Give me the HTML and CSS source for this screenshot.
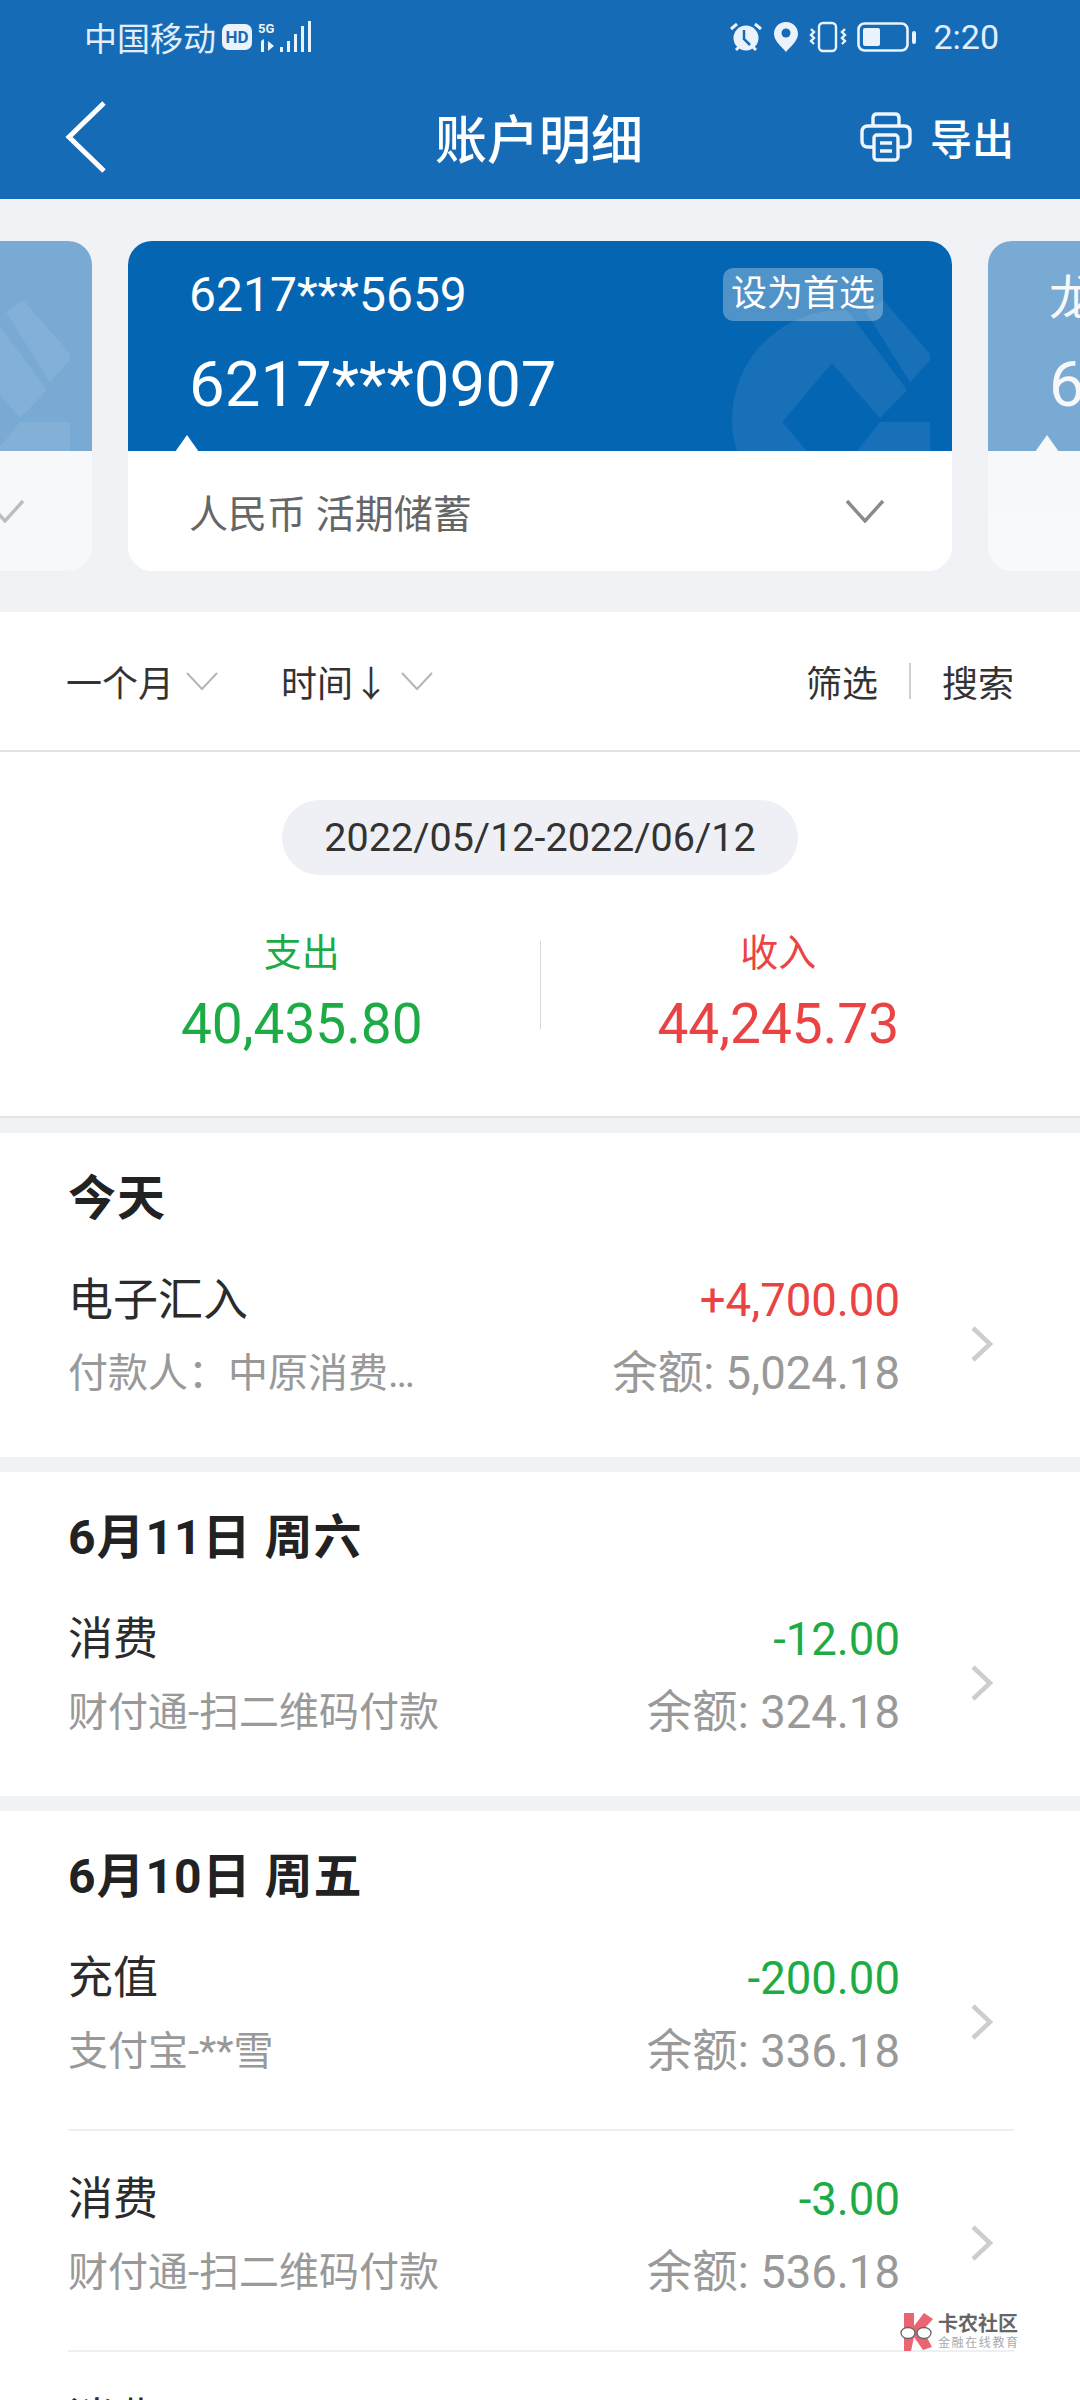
FILE: index.html
```html
<!DOCTYPE html>
<html lang="zh-CN">
<head>
  <meta charset="UTF-8" />
  <meta name="viewport" content="width=device-width, initial-scale=1.0">
  <title>账户明细</title>
  <link rel="stylesheet" href="styles.css">
</head>
<body>
  <!-- Header -->
  <header class="header">
    <div class="status">
      <div class="status-left">
        <span>中国移动</span>
        <span class="hd">HD</span>
        <svg width="54" height="32" viewBox="0 0 54 32" fill="#eaf3fb">
          <text x="0" y="12" class="net">5G</text>
          <path d="M3 20l3-2v13H3zM10 20l6 5-6 5zM22 26h3v5h-3zM29 20h3v11h-3zM36 13h3v18h-3zM43 5h3v26h-3zM50 0h3v31h-3z"/>
        </svg>
      </div>
      <div class="status-right">
        <svg width="34" height="32" viewBox="0 0 34 32">
          <circle cx="17" cy="17" r="12.5" fill="#eaf3fb"/>
          <path d="M2 8l6-5M32 8l-6-5M7 29l3-3M27 29l-3-3" stroke="#eaf3fb" stroke-width="3" fill="none"/>
          <path d="M15 9v9l6 6" stroke="#166bb7" stroke-width="2.5" fill="none"/>
        </svg>
        <svg width="26" height="32" viewBox="0 0 26 32">
          <path d="M13 1C6 1 1 6 1 13c0 7 8 13 12 18 4-5 12-11 12-18C25 6 20 1 13 1z" fill="#eaf3fb"/>
          <circle cx="13" cy="12" r="4.5" fill="#166bb7"/>
        </svg>
        <svg width="38" height="32" viewBox="0 0 38 32" fill="none" stroke="#eaf3fb" stroke-width="2.4">
          <rect x="10" y="2" width="17" height="28" rx="4"/>
          <path d="M2 8l3 3-3 3 3 3-3 3 3 3M36 8l-3 3 3 3-3 3 3 3-3 3"/>
        </svg>
        <svg width="62" height="32" viewBox="0 0 62 32">
          <rect x="1.5" y="2.5" width="49" height="27" rx="6" fill="none" stroke="#eaf3fb" stroke-width="2.6"/>
          <rect x="6" y="7" width="17" height="18" rx="2" fill="#eaf3fb"/>
          <rect x="55" y="10" width="4" height="13" rx="2" fill="#eaf3fb"/>
        </svg>
        <span class="clock">2:20</span>
      </div>
    </div>
    <div class="title-bar">
      <svg class="back" width="44" height="72" viewBox="0 0 44 72" fill="none" stroke="#fff" stroke-width="5">
        <path d="M40 2L5 36l35 34"/>
      </svg>
      <h1 class="title">账户明细</h1>
      <div class="export">
        <svg width="52" height="50" viewBox="0 0 52 50" fill="none" stroke="#eef5fb" stroke-width="3.4">
          <path d="M13 14V6q0-4 4-4h18q4 0 4 4v8"/>
          <path d="M13 35H8q-6 0-6-6V20q0-6 6-6h36q6 0 6 6v9q0 6-6 6h-5"/>
          <rect x="14" y="23" width="24" height="25" rx="3"/>
          <path d="M20 31h12M20 39h12"/>
        </svg>
        <span>导出</span>
      </div>
    </div>
  </header>

  <!-- Account cards -->
  <section class="cards">
    <div class="cards-track">
      <div class="card card-side">
        <div class="card-top">
          <svg class="watermark" width="824" height="210" viewBox="128 241 824 210" fill="#fff">
            <path d="M847 310A110 110 0 0 0 732 420Q732 436 737 451H807L782 422 832 363 880 418 907 390z"/>
            <path d="M866 312L883 300 930 354V360L910 382z"/>
            <path d="M880 422H930V451H857z"/>
          </svg>
        </div>
        <div class="card-bottom">
          <svg class="chev" width="40" height="24" viewBox="0 0 40 24" fill="none" stroke="#8a8a8a" stroke-width="3.4"><path d="M2 2l18 20L38 2"/></svg>
        </div>
      </div>
      <div class="card">
        <div class="card-top">
          <svg class="watermark" width="824" height="210" viewBox="128 241 824 210" fill="#fff">
            <path d="M847 310A110 110 0 0 0 732 420Q732 436 737 451H807L782 422 832 363 880 418 907 390z"/>
            <path d="M866 312L883 300 930 354V360L910 382z"/>
            <path d="M880 422H930V451H857z"/>
          </svg>
          <div class="card-row">
            <span class="card-sub">6217***5659</span>
            <span class="tag">设为首选</span>
          </div>
          <div class="card-no">6217***0907</div>
        </div>
        <div class="card-bottom">
          <span class="card-type">人民币 活期储蓄</span>
          <svg class="chev" width="40" height="24" viewBox="0 0 40 24" fill="none" stroke="#8a8a8a" stroke-width="3.4"><path d="M2 2l18 20L38 2"/></svg>
        </div>
        <span class="notch"></span>
      </div>
      <div class="card card-side">
        <div class="card-top">
          <div class="card-row"><span class="card-sub">龙卡</span></div>
          <div class="card-no">6217</div>
        </div>
        <div class="card-bottom"></div>
        <span class="notch"></span>
      </div>
    </div>
  </section>

  <!-- Filter bar -->
  <nav class="filters">
    <div class="filter-item">一个月
      <svg width="32" height="20" viewBox="0 0 32 20" fill="none" stroke="#b5b5b5" stroke-width="2"><path d="M1 2l15 16L31 2"/></svg>
    </div>
    <div class="filter-item filter-time">时间↓
      <svg width="32" height="20" viewBox="0 0 32 20" fill="none" stroke="#b5b5b5" stroke-width="2"><path d="M1 2l15 16L31 2"/></svg>
    </div>
    <div class="filter-links">
      <span>筛选</span>
      <i class="filter-sep"></i>
      <span>搜索</span>
    </div>
  </nav>

  <!-- Summary -->
  <section class="summary">
    <div class="range">2022/05/12-2022/06/12</div>
    <div class="totals">
      <div class="total green">
        <div class="total-label">支出</div>
        <div class="total-num">40,435.80</div>
      </div>
      <i class="total-sep"></i>
      <div class="total red">
        <div class="total-label">收入</div>
        <div class="total-num">44,245.73</div>
      </div>
    </div>
  </section>

  <!-- Transactions -->
  <section class="day">
    <h2 class="day-title">今天</h2>
    <div class="tx">
      <div class="tx-info">
        <div class="tx-name">电子汇入</div>
        <div class="tx-desc">付款人：中原消费…</div>
      </div>
      <div class="tx-money">
        <div class="tx-amount red">+4,700.00</div>
        <div class="tx-balance">余额: 5,024.18</div>
      </div>
      <svg class="tx-arrow" width="22" height="36" viewBox="0 0 22 36" fill="none" stroke="#cdcdcd" stroke-width="4.5"><path d="M2 2l17 16L2 34"/></svg>
    </div>
  </section>

  <section class="day">
    <h2 class="day-title">6月11日 周六</h2>
    <div class="tx">
      <div class="tx-info">
        <div class="tx-name">消费</div>
        <div class="tx-desc">财付通-扫二维码付款</div>
      </div>
      <div class="tx-money">
        <div class="tx-amount green">-12.00</div>
        <div class="tx-balance">余额: 324.18</div>
      </div>
      <svg class="tx-arrow" width="22" height="36" viewBox="0 0 22 36" fill="none" stroke="#cdcdcd" stroke-width="4.5"><path d="M2 2l17 16L2 34"/></svg>
    </div>
  </section>

  <section class="day">
    <h2 class="day-title">6月10日 周五</h2>
    <div class="tx">
      <div class="tx-info">
        <div class="tx-name">充值</div>
        <div class="tx-desc">支付宝-**雪</div>
      </div>
      <div class="tx-money">
        <div class="tx-amount green">-200.00</div>
        <div class="tx-balance">余额: 336.18</div>
      </div>
      <svg class="tx-arrow" width="22" height="36" viewBox="0 0 22 36" fill="none" stroke="#cdcdcd" stroke-width="4.5"><path d="M2 2l17 16L2 34"/></svg>
    </div>
    <div class="tx">
      <div class="tx-info">
        <div class="tx-name">消费</div>
        <div class="tx-desc">财付通-扫二维码付款</div>
      </div>
      <div class="tx-money">
        <div class="tx-amount green">-3.00</div>
        <div class="tx-balance">余额: 536.18</div>
      </div>
      <svg class="tx-arrow" width="22" height="36" viewBox="0 0 22 36" fill="none" stroke="#cdcdcd" stroke-width="4.5"><path d="M2 2l17 16L2 34"/></svg>
    </div>
    <div class="tx tx-cut">
      <div class="tx-info">
        <div class="tx-name">消费</div>
      </div>
    </div>
  </section>

  <!-- Site watermark -->
  <div class="stamp">
    <svg width="34" height="38" viewBox="0 0 34 38">
      <path d="M4 0h10v13L24 0l9 6-10 11 9 17-9 3-9-13-3 14H4z" fill="#ea6472"/>
      <ellipse cx="8" cy="20" rx="7" ry="5.5" fill="#fff" stroke="#666" stroke-width="1.3"/>
      <ellipse cx="24" cy="20" rx="7" ry="5.5" fill="#fff" stroke="#666" stroke-width="1.3"/>
    </svg>
    <div>
      <div class="stamp-name">卡农社区</div>
      <div class="stamp-sub">金融在线教育</div>
    </div>
  </div>
</body>
</html>
```

FILE: styles.css
```css
* {
  box-sizing: border-box;
}
html, body {
  height: 2400px;
  overflow: hidden;
}
body {
  margin: 0;
  position: relative;
  background: #f0f2f6;
  color: #2b2b2b;
  font-family: Roboto, "Noto Sans CJK SC", sans-serif;
}

/* Header */
.header {
  height: 199px;
  background: #166bb7;
  color: #fff;
}
.status {
  height: 74px;
  padding: 0 81px 0 84px;
  display: flex;
  justify-content: space-between;
  align-items: center;
  color: #e3eefa;
  font-size: 33px;
}
.status-left, .status-right {
  display: flex;
  align-items: center;
}
.status-left {
  gap: 6px;
}
.status-right {
  gap: 10px;
}
.hd {
  width: 30px;
  height: 26px;
  border-radius: 7px;
  background: #eaf3fb;
  color: #166bb7;
  font-size: 17px;
  font-weight: 700;
  text-align: center;
  line-height: 26px;
}
.net {
  font-size: 13px;
  font-weight: 700;
}
.clock {
  font-size: 34px;
  margin-left: 4px;
}
.title-bar {
  height: 125px;
  padding: 0 66px 0 64px;
  display: grid;
  grid-template-columns: 1fr auto 1fr;
  align-items: center;
}
.title {
  margin: 0;
  font-size: 52px;
  font-weight: 500;
}
.export {
  justify-self: end;
  display: flex;
  align-items: center;
  gap: 18px;
  font-size: 42px;
  font-weight: 500;
}

/* Cards */
.cards {
  height: 413px;
  padding-top: 42px;
  overflow: hidden;
}
.cards-track {
  display: flex;
  gap: 36px;
  margin-left: -732px;
}
.card {
  position: relative;
  flex: 0 0 824px;
  height: 330px;
  border-radius: 24px;
  overflow: hidden;
  background: #fff;
}
.card-side {
  opacity: .5;
}
.card-top {
  position: relative;
  height: 210px;
  padding: 25px 69px 0 61px;
  background: #0465b2;
  color: #fff;
}
.card-row {
  position: relative;
  display: flex;
  justify-content: space-between;
  align-items: center;
  height: 56px;
}
.card-sub {
  font-size: 48px;
}
.card-no {
  position: relative;
  margin-top: 27px;
  font-size: 63.5px;
  line-height: 72px;
}
.tag {
  padding: 0 8px;
  height: 53px;
  border-radius: 10px;
  background: rgba(255, 255, 255, .3);
  font-size: 36px;
  line-height: 53px;
}
.watermark {
  position: absolute;
  left: 0;
  top: 0;
  opacity: .08;
}
.card-bottom {
  height: 120px;
  padding: 0 67px 0 61px;
  display: flex;
  align-items: center;
  justify-content: space-between;
  font-size: 39px;
  color: #666;
}
.card-bottom .chev {
  margin-left: auto;
}
.notch {
  position: absolute;
  left: 47px;
  top: 194px;
  width: 24px;
  height: 17px;
  background: #fff;
  clip-path: polygon(50% 0, 100% 100%, 0 100%);
}

/* Filters */
.filters {
  height: 140px;
  padding: 0 66px;
  display: flex;
  align-items: center;
  background: #fff;
  border-bottom: 2px solid #e3e3e3;
  font-size: 36px;
  color: #333;
}
.filter-item {
  display: flex;
  align-items: center;
  gap: 12px;
}
.filter-time {
  margin-left: 63px;
}
.filter-links {
  margin-left: auto;
  display: flex;
  align-items: center;
  gap: 31px;
}
.filter-sep {
  width: 2px;
  height: 36px;
  background: #cfcfcf;
}

/* Summary */
.summary {
  height: 366px;
  padding-top: 48px;
  background: #fff;
  border-bottom: 2px solid #e3e3e3;
}
.range {
  width: 516px;
  height: 75px;
  margin: 0 auto;
  border-radius: 38px;
  background: #eef0f5;
  text-align: center;
  line-height: 75px;
  font-size: 39.5px;
  color: #333;
}
.totals {
  margin-top: 52px;
  padding: 0 64px;
  display: flex;
  align-items: center;
}
.total {
  flex: 1;
  text-align: center;
}
.total-label {
  font-size: 38px;
  line-height: 52px;
}
.total-num {
  margin-top: 12px;
  font-size: 55px;
  line-height: 66px;
}
.total-sep {
  width: 1px;
  height: 88px;
  margin-bottom: 14px;
  background: #d8d8d8;
}
.green {
  color: #1dab45;
}
.red {
  color: #ea4343;
}

/* Transactions */
.day {
  margin-top: 15px;
  padding: 33px 66px 0 68px;
  min-height: 324px;
  background: #fff;
}
.day-title {
  margin: 0;
  font-size: 48px;
  line-height: 66px;
  font-weight: 700;
  letter-spacing: 1px;
  color: #222;
}
.tx {
  position: relative;
  height: 221px;
  padding-top: 38px;
  display: flex;
  align-items: flex-start;
  border-bottom: 2px solid #efefef;
}
.day:not(:last-of-type) .tx {
  border-bottom: 0;
}
.tx-cut {
  height: 50px;
  overflow: hidden;
  border-bottom: 0;
}
.tx-name {
  font-size: 45px;
  line-height: 62px;
  color: #2b2b2b;
}
.tx-desc {
  margin-top: 12px;
  font-size: 40px;
  line-height: 60px;
  color: #999;
}
.tx-money {
  margin-left: auto;
  margin-right: 114px;
  text-align: right;
}
.tx-amount {
  font-size: 45.5px;
  line-height: 62px;
}
.tx-balance {
  margin-top: 12px;
  font-size: 45.5px;
  line-height: 60px;
  color: #999;
}
.tx-arrow {
  position: absolute;
  right: 21px;
  top: 94px;
}

/* Site watermark */
.stamp {
  position: absolute;
  left: 900px;
  top: 2313px;
  display: flex;
  gap: 4px;
}
.stamp-name {
  font-size: 20px;
  line-height: 22px;
  font-weight: 700;
  color: #666;
}
.stamp-sub {
  margin-top: 1px;
  font-size: 12px;
  line-height: 14px;
  letter-spacing: 1.6px;
  color: #aaa;
}
```
